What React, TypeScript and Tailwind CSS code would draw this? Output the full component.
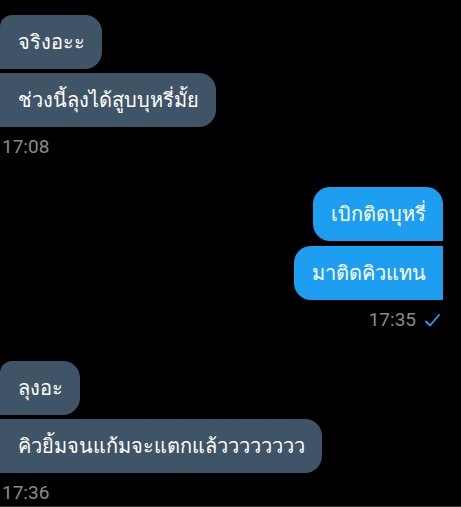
import React from 'react';

const thai = { fontFamily: '"Noto Sans", Roboto, sans-serif' };
const time = { fontFamily: 'Roboto, "Noto Sans", sans-serif' };

const Left = ({ text, first }: { text: string; first?: boolean }) => (
  <div
    className={`self-start bg-[#3f5467] text-white text-[20px] leading-[28px] py-[13px] pl-[18px] pr-[17px] rounded-r-[17px] ${
      first ? 'rounded-tl-[12px]' : ''
    }`}
    style={thai}
  >
    {text}
  </div>
);

const Right = ({ text, first }: { text: string; first?: boolean }) => (
  <div
    className={`self-end bg-[#1e9ef0] text-white text-[20px] leading-[28px] py-[13px] pl-[18px] pr-[17px] rounded-l-[17px] ${
      first ? 'rounded-tr-[17px]' : ''
    }`}
    style={thai}
  >
    {text}
  </div>
);

export default function App() {
  return (
    <div className="w-[461px] h-[507px] bg-black overflow-hidden flex flex-col">
      <div className="flex-1 flex flex-col pt-[15px] pr-[18px]">
        <div className="flex flex-col gap-[4px]">
          <Left text="จริงอะะ" first />
          <Left text="ช่วงนี้ลุงได้สูบบุหรี่มั้ย" />
        </div>
        <div className="text-[#8a8a8a] text-[19px] leading-[24px] pl-[2px] mt-[8px]" style={time}>17:08</div>

        <div className="flex flex-col gap-[5px] mt-[28px]">
          <Right text="เบิกติดบุหรี่" first />
          <Right text="มาติดคิวแทน" />
        </div>
        <div className="self-end flex items-center gap-[9px] text-[#8a8a8a] text-[19px] leading-[24px] mt-[8px] pr-[3px]" style={time}>
          <span>17:35</span>
          <svg width="15" height="13" viewBox="0 0 15 13" fill="none">
            <path d="M1 7.5 L5 11.5 L14 1" stroke="#2f9bef" strokeWidth="1.8" strokeLinecap="round" strokeLinejoin="round" />
          </svg>
        </div>

        <div className="flex flex-col gap-[4px] mt-[29px]">
          <Left text="ลุงอะ" first />
          <Left text="คิวยิ้มจนแก้มจะแตกแล้วววววววว" />
        </div>
        <div className="text-[#8a8a8a] text-[19px] leading-[24px] pl-[2px] mt-[8px]" style={time}>17:36</div>
      </div>
      <div className="h-px bg-[#3a3a3a]" />
    </div>
  );
}
